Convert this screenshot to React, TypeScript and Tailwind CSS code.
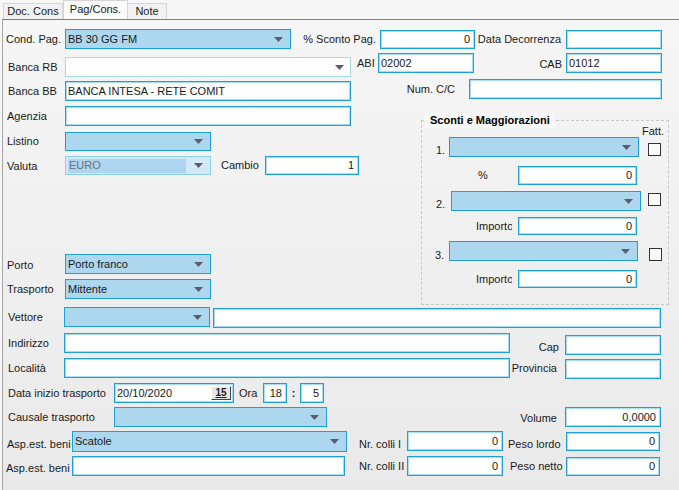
import React from "react";

type BoxProps = {
  cls?: string;
  v?: string;
  right?: boolean;
  children?: React.ReactNode;
};

const Arrow = () => (
  <svg width="9" height="5" viewBox="0 0 9 5" className="shrink-0">
    <path d="M0 0h9L4.5 5z" fill="#5c5c6c" />
  </svg>
);

const Input = ({ cls = "", v, right, children }: BoxProps) => (
  <div
    className={`flex items-center whitespace-nowrap border border-[#1d9fd7] bg-white shadow-[inset_0_0_0_1px_#a8def3] ${
      right ? "justify-end pr-[4px]" : "pl-[2px]"
    } ${cls}`}
  >
    {v}
    {children}
  </div>
);

const Combo = ({ cls = "", v }: BoxProps) => (
  <div
    className={`flex items-center border border-[#1d9fd7] bg-[#add6ef] pl-[2px] pr-[7px] ${cls}`}
  >
    <span className="flex-1 whitespace-nowrap">{v}</span>
    <Arrow />
  </div>
);

const Lbl = ({ cls = "", children }: BoxProps) => (
  <div className={`flex items-center whitespace-nowrap ${cls}`}>{children}</div>
);

const Check = ({ cls = "" }: BoxProps) => (
  <div className={`h-[13px] w-[13px] shrink-0 border border-[#333] bg-[#fafafa] ${cls}`} />
);

const Importo = () => (
  <div className="flex h-[18px] w-[96px] items-center pl-[54px]">
    <span className="w-[36px] overflow-hidden whitespace-nowrap">Importo</span>
  </div>
);

const Sconti = () => (
  <div className="relative mt-[19px] h-[185px] w-[248px] border border-dashed border-[#c9c9c9]">
    <div className="absolute -top-[8px] left-[3px] bg-[#f8f8f8] px-[5px] py-[2px] font-bold text-black">
      Sconti e Maggiorazioni
    </div>
    <div className="mt-[4px] flex h-[12px] items-center pl-[220px]">Fatt.</div>
    <div className="flex h-[20px]">
      <Lbl cls="mt-[3px] h-[20px] w-[27px] pl-[14px]">1.</Lbl>
      <Combo cls="h-[20px] w-[190px]" />
      <Check cls="ml-[9px] mt-[6px]" />
    </div>
    <div className="mt-[9px] flex h-[19px]">
      <Lbl cls="h-[19px] w-[96px] pl-[56px]">%</Lbl>
      <Input cls="h-[19px] w-[119px]" v="0" right />
    </div>
    <div className="mt-[6px] flex h-[20px]">
      <Lbl cls="mt-[3px] h-[20px] w-[29px] pl-[14px]">2.</Lbl>
      <Combo cls="h-[20px] w-[190px]" />
      <Check cls="ml-[7px] mt-[2px]" />
    </div>
    <div className="mt-[6px] flex h-[18px]">
      <Importo />
      <Input cls="h-[18px] w-[119px]" v="0" right />
    </div>
    <div className="mt-[6px] flex h-[20px]">
      <Lbl cls="mt-[4px] h-[20px] w-[27px] pl-[13px]">3.</Lbl>
      <Combo cls="h-[20px] w-[189px]" />
      <Check cls="ml-[11px] mt-[7px]" />
    </div>
    <div className="mt-[9px] flex h-[18px]">
      <Importo />
      <Input cls="h-[18px] w-[119px]" v="0" right />
    </div>
  </div>
);

const App = () => {
  return (
    <div className="h-[490px] w-[679px] overflow-hidden bg-[#f7f7f7] font-['Liberation_Sans',Arial,sans-serif] text-[11px] leading-none text-[#1a1a1a]">
      {/* tabs */}
      <div className="flex h-[19px] items-end pl-[3px]">
        <div className="flex h-[16px] w-[60px] items-center justify-center border border-b-0 border-[#d6d6d6] bg-[#f2f2f2]">
          Doc. Cons
        </div>
        <div className="flex h-[19px] w-[65px] items-center justify-center border border-b-0 border-[#d6d6d6] bg-[#fbfbfb] pb-[2px]">
          Pag/Cons.
        </div>
        <div className="flex h-[16px] w-[39px] items-center justify-center border border-b-0 border-l-0 border-[#d6d6d6] bg-[#f2f2f2]">
          Note
        </div>
      </div>

      <div className="ml-[2px] h-[471px] border-l border-t border-l-[#a5a5a5] border-t-[#1d9fd7] bg-linear-to-b from-[#f6f6f6] to-[#e9e9e9]">
        {/* pagamento */}
        <div className="mt-[9px] flex h-[20px] items-start">
          <Lbl cls="h-[20px] w-[62px] pl-[3px]">Cond. Pag.</Lbl>
          <Combo cls="h-[20px] w-[226px]" v="BB 30 GG FM" />
          <Lbl cls="h-[20px] w-[89px] justify-end pr-[4px]">% Sconto Pag.</Lbl>
          <Input cls="mt-[1px] h-[19px] w-[95px]" v="0" right />
          <Lbl cls="h-[20px] w-[91px] justify-end pr-[5px]">Data Decorrenza</Lbl>
          <Input cls="mt-[1px] h-[19px] w-[96px]" />
        </div>
        <div className="mt-[4px] flex h-[24px] items-start">
          <Lbl cls="mt-[4px] h-[20px] w-[62px] pl-[5px]">Banca RB</Lbl>
          <div className="mt-[4px] flex h-[20px] w-[286px] items-center justify-end border border-[#a6d8ee] bg-white pr-[6px]">
            <Arrow />
          </div>
          <Lbl cls="h-[20px] w-[27px] pl-[6px]">ABI</Lbl>
          <Input cls="h-[20px] w-[96px]" v="02002" />
          <Lbl cls="mt-[1px] h-[20px] w-[92px] justify-end pr-[4px]">CAB</Lbl>
          <Input cls="h-[20px] w-[96px]" v="01012" />
        </div>
        <div className="mt-[2px] flex h-[22px] items-start">
          <Lbl cls="mt-[2px] h-[20px] w-[62px] pl-[5px]">Banca BB</Lbl>
          <Input cls="mt-[2px] h-[20px] w-[286px]" v="BANCA INTESA - RETE COMIT" />
          <Lbl cls="h-[20px] w-[118px] justify-end pr-[14px]">Num. C/C</Lbl>
          <Input cls="h-[20px] w-[193px]" />
        </div>

        {/* listino / porto + sconti */}
        <div className="flex items-start">
          <div className="w-[418px]">
            <div className="mt-[5px] flex h-[20px]">
              <Lbl cls="h-[20px] w-[62px] pl-[4px]">Agenzia</Lbl>
              <Input cls="h-[20px] w-[286px]" />
            </div>
            <div className="mt-[6px] flex h-[19px]">
              <Lbl cls="h-[19px] w-[62px] pl-[4px]">Listino</Lbl>
              <Combo cls="h-[19px] w-[146px]" />
            </div>
            <div className="mt-[5px] flex h-[19px]">
              <Lbl cls="mt-[1px] h-[19px] w-[62px] pl-[4px]">Valuta</Lbl>
              <div className="flex h-[19px] w-[146px] items-center border border-[#8ccfe9] bg-[#d3e9f5] pl-[2px] pr-[7px]">
                <span className="mr-[8px] flex h-[14px] flex-1 items-center bg-[#add5ef] pl-[1px] text-[#6e6e80]">
                  EURO
                </span>
                <Arrow />
              </div>
              <Lbl cls="h-[19px] w-[54px] pl-[10px]">Cambio</Lbl>
              <Input cls="h-[19px] w-[94px]" v="1" right />
            </div>
            <div className="mt-[79px] flex h-[20px]">
              <Lbl cls="mt-[1px] h-[20px] w-[62px] pl-[4px]">Porto</Lbl>
              <Combo cls="h-[20px] w-[146px]" v="Porto franco" />
            </div>
            <div className="mt-[5px] flex h-[20px]">
              <Lbl cls="h-[20px] w-[62px] pl-[4px]">Trasporto</Lbl>
              <Combo cls="h-[20px] w-[146px]" v="Mittente" />
            </div>
          </div>
          <Sconti />
        </div>

        {/* trasporto */}
        <div className="mt-[2px] flex h-[21px] items-start">
          <Lbl cls="h-[20px] w-[61px] pl-[5px]">Vettore</Lbl>
          <Combo cls="h-[20px] w-[146px]" />
          <Input cls="ml-[3px] mt-[1px] h-[20px] w-[448px]" />
        </div>
        <div className="mt-[5px] flex h-[22px] items-start">
          <Lbl cls="h-[20px] w-[61px] pl-[5px]">Indirizzo</Lbl>
          <Input cls="h-[20px] w-[446px]" />
          <Lbl cls="mt-[4px] h-[20px] w-[55px] justify-end pr-[6px]">Cap</Lbl>
          <Input cls="mt-[2px] h-[20px] w-[96px]" />
        </div>
        <div className="mt-[3px] flex h-[21px] items-start">
          <Lbl cls="h-[20px] w-[61px] pl-[5px]">Località</Lbl>
          <Input cls="h-[20px] w-[446px]" />
          <Lbl cls="h-[20px] w-[55px] justify-end pr-[8px]">Provincia</Lbl>
          <Input cls="mt-[1px] h-[20px] w-[96px]" />
        </div>
        <div className="mt-[4px] flex h-[20px] items-start">
          <Lbl cls="h-[20px] w-[111px] pl-[5px]">Data inizio trasporto</Lbl>
          <Input cls="h-[20px] w-[120px] pr-[2px]">
            <span className="flex-1">20/10/2020</span>
            <div className="flex h-[14px] w-[20px] items-center justify-center border border-b-[#444] border-l-[#fff] border-r-[#444] border-t-[#fff] bg-[#e6e6e6] text-[10px] font-bold text-[#222] underline">
              15
            </div>
          </Input>
          <Lbl cls="h-[20px] w-[29px] pl-[5px]">Ora</Lbl>
          <Input cls="h-[20px] w-[24px]" v="18" right />
          <Lbl cls="h-[20px] w-[13px] justify-center font-bold">:</Lbl>
          <Input cls="h-[20px] w-[24px]" v="5" right />
        </div>
        <div className="mt-[4px] flex h-[20px] items-start">
          <Lbl cls="h-[20px] w-[111px] pl-[5px]">Causale trasporto</Lbl>
          <Combo cls="h-[20px] w-[213px]" />
          <Lbl cls="mt-[1px] h-[20px] w-[238px] justify-end pr-[8px]">Volume</Lbl>
          <Input cls="h-[20px] w-[96px]" v="0,0000" right />
        </div>
        <div className="mt-[4px] flex h-[21px] items-start">
          <Lbl cls="mt-[3px] h-[20px] w-[69px] overflow-hidden pl-[4px]">Asp.est. beni</Lbl>
          <Combo cls="h-[21px] w-[275px]" v="Scatole" />
          <Lbl cls="mt-[3px] h-[20px] w-[60px] pl-[12px]">Nr. colli I</Lbl>
          <Input cls="h-[20px] w-[96px]" v="0" right />
          <Lbl cls="mt-[3px] h-[20px] w-[63px] pl-[5px]">Peso lordo</Lbl>
          <Input cls="mt-[1px] h-[19px] w-[94px]" v="0" right />
        </div>
        <div className="mt-[4px] flex h-[21px] items-start">
          <Lbl cls="mt-[2px] h-[20px] w-[69px] overflow-hidden pl-[3px]">Asp.est. beni</Lbl>
          <Input cls="h-[20px] w-[273px]" />
          <Lbl cls="h-[20px] w-[62px] pl-[14px]">Nr. colli II</Lbl>
          <Input cls="h-[20px] w-[96px]" v="0" right />
          <Lbl cls="h-[20px] w-[63px] pl-[7px]">Peso netto</Lbl>
          <Input cls="mt-[1px] h-[19px] w-[94px]" v="0" right />
        </div>
      </div>
    </div>
  );
};

export default App;
